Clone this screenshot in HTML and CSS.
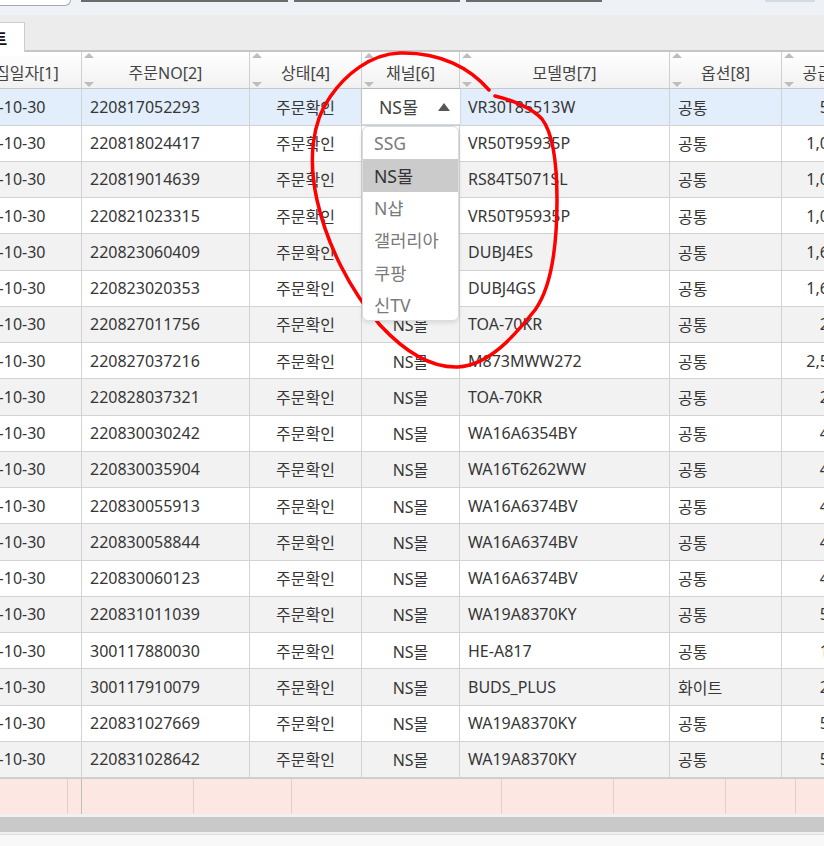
FILE: index.html
```html
<!DOCTYPE html>
<html lang="ko">
<head>
    <meta charset="UTF-8">
    <title>주문리스트</title>
    <link rel="stylesheet" href="styles.css">
</head>
<body>
    <div class="topbar">
        <div class="search-box"></div>
        <div class="field f1"></div>
        <div class="field f2"></div>
        <div class="field f3"></div>
        <div class="top-btn"></div>
    </div>

    <div class="tabbar">
        <div class="tab">리스트</div>
    </div>

    <div class="grid">
        <div class="grid-inner">
            <div class="row head">
                <div class="cell"><span class="sort-up"></span><span class="sort-down"></span>수집일자[1]</div>
                <div class="cell"><span class="sort-up"></span><span class="sort-down"></span>주문NO[2]</div>
                <div class="cell"><span class="sort-up"></span><span class="sort-down"></span>상태[4]</div>
                <div class="cell"><span class="sort-up"></span><span class="sort-down"></span>채널[6]</div>
                <div class="cell"><span class="sort-up"></span><span class="sort-down"></span>모델명[7]</div>
                <div class="cell"><span class="sort-up"></span><span class="sort-down"></span>옵션[8]</div>
                <div class="cell"><span class="sort-up"></span><span class="sort-down"></span>공급가[9]</div>
            </div>

            <div class="row selected">
                <div class="cell date">2022-10-30</div>
                <div class="cell">220817052293</div>
                <div class="cell c">주문확인</div>
                <div class="cell editing">
                    <div class="select">
                        <span>NS몰</span>
                        <span class="caret"></span>
                    </div>
                    <ul class="options">
                        <li>SSG</li>
                        <li class="hover">NS몰</li>
                        <li>N샵</li>
                        <li>갤러리아</li>
                        <li>쿠팡</li>
                        <li>신TV</li>
                    </ul>
                </div>
                <div class="cell">VR30T85513W</div>
                <div class="cell">공통</div>
                <div class="cell r">590,000</div>
            </div>

            <div class="row">
                <div class="cell date">2022-10-30</div><div class="cell">220818024417</div><div class="cell c">주문확인</div><div class="cell c">NS몰</div><div class="cell">VR50T95935P</div><div class="cell">공통</div><div class="cell r">1,090,000</div>
            </div>
            <div class="row alt">
                <div class="cell date">2022-10-30</div><div class="cell">220819014639</div><div class="cell c">주문확인</div><div class="cell c">NS몰</div><div class="cell">RS84T5071SL</div><div class="cell">공통</div><div class="cell r">1,049,000</div>
            </div>
            <div class="row">
                <div class="cell date">2022-10-30</div><div class="cell">220821023315</div><div class="cell c">주문확인</div><div class="cell c">NS몰</div><div class="cell">VR50T95935P</div><div class="cell">공통</div><div class="cell r">1,090,000</div>
            </div>
            <div class="row alt">
                <div class="cell date">2022-10-30</div><div class="cell">220823060409</div><div class="cell c">주문확인</div><div class="cell c">NS몰</div><div class="cell">DUBJ4ES</div><div class="cell">공통</div><div class="cell r">1,690,000</div>
            </div>
            <div class="row">
                <div class="cell date">2022-10-30</div><div class="cell">220823020353</div><div class="cell c">주문확인</div><div class="cell c">NS몰</div><div class="cell">DUBJ4GS</div><div class="cell">공통</div><div class="cell r">1,690,000</div>
            </div>
            <div class="row alt">
                <div class="cell date">2022-10-30</div><div class="cell">220827011756</div><div class="cell c">주문확인</div><div class="cell c">NS몰</div><div class="cell">TOA-70KR</div><div class="cell">공통</div><div class="cell r">259,000</div>
            </div>
            <div class="row">
                <div class="cell date">2022-10-30</div><div class="cell">220827037216</div><div class="cell c">주문확인</div><div class="cell c">NS몰</div><div class="cell">M873MWW272</div><div class="cell">공통</div><div class="cell r">2,590,000</div>
            </div>
            <div class="row alt">
                <div class="cell date">2022-10-30</div><div class="cell">220828037321</div><div class="cell c">주문확인</div><div class="cell c">NS몰</div><div class="cell">TOA-70KR</div><div class="cell">공통</div><div class="cell r">259,000</div>
            </div>
            <div class="row">
                <div class="cell date">2022-10-30</div><div class="cell">220830030242</div><div class="cell c">주문확인</div><div class="cell c">NS몰</div><div class="cell">WA16A6354BY</div><div class="cell">공통</div><div class="cell r">459,000</div>
            </div>
            <div class="row alt">
                <div class="cell date">2022-10-30</div><div class="cell">220830035904</div><div class="cell c">주문확인</div><div class="cell c">NS몰</div><div class="cell">WA16T6262WW</div><div class="cell">공통</div><div class="cell r">429,000</div>
            </div>
            <div class="row">
                <div class="cell date">2022-10-30</div><div class="cell">220830055913</div><div class="cell c">주문확인</div><div class="cell c">NS몰</div><div class="cell">WA16A6374BV</div><div class="cell">공통</div><div class="cell r">449,000</div>
            </div>
            <div class="row alt">
                <div class="cell date">2022-10-30</div><div class="cell">220830058844</div><div class="cell c">주문확인</div><div class="cell c">NS몰</div><div class="cell">WA16A6374BV</div><div class="cell">공통</div><div class="cell r">449,000</div>
            </div>
            <div class="row">
                <div class="cell date">2022-10-30</div><div class="cell">220830060123</div><div class="cell c">주문확인</div><div class="cell c">NS몰</div><div class="cell">WA16A6374BV</div><div class="cell">공통</div><div class="cell r">449,000</div>
            </div>
            <div class="row alt">
                <div class="cell date">2022-10-30</div><div class="cell">220831011039</div><div class="cell c">주문확인</div><div class="cell c">NS몰</div><div class="cell">WA19A8370KY</div><div class="cell">공통</div><div class="cell r">599,000</div>
            </div>
            <div class="row">
                <div class="cell date">2022-10-30</div><div class="cell">300117880030</div><div class="cell c">주문확인</div><div class="cell c">NS몰</div><div class="cell">HE-A817</div><div class="cell">공통</div><div class="cell r">159,000</div>
            </div>
            <div class="row alt">
                <div class="cell date">2022-10-30</div><div class="cell">300117910079</div><div class="cell c">주문확인</div><div class="cell c">NS몰</div><div class="cell">BUDS_PLUS</div><div class="cell">화이트</div><div class="cell r">219,000</div>
            </div>
            <div class="row">
                <div class="cell date">2022-10-30</div><div class="cell">220831027669</div><div class="cell c">주문확인</div><div class="cell c">NS몰</div><div class="cell">WA19A8370KY</div><div class="cell">공통</div><div class="cell r">599,000</div>
            </div>
            <div class="row alt">
                <div class="cell date">2022-10-30</div><div class="cell">220831028642</div><div class="cell c">주문확인</div><div class="cell c">NS몰</div><div class="cell">WA19A8370KY</div><div class="cell">공통</div><div class="cell r">599,000</div>
            </div>
        </div>
    </div>

    <div class="summary">
        <div class="sum-inner">
            <div class="sum-cell"></div>
            <div class="sum-cell dark"></div>
            <div class="sum-cell"></div>
            <div class="sum-cell"></div>
            <div class="sum-cell"></div>
            <div class="sum-cell"></div>
            <div class="sum-cell"></div>
            <div class="sum-cell"></div>
            <div class="sum-cell"></div>
        </div>
    </div>

    <div class="hscroll"><div class="thumb"></div></div>
    <div class="statusbar"></div>

    <!-- red pen mark over the channel column -->
    <svg class="scribble" width="824" height="846" viewBox="0 0 824 846">
        <path d="M489 90 C470 68 440 52 400 53 C370 54 345 75 330 97 C312 122 308 160 317 200 C327 245 350 290 380 325 C405 352 430 368 458 367 C490 365 515 335 535 310 C553 285 557 240 557 200 C557 160 552 132 542 119 C532 108 512 100 495 96"
              fill="none" stroke="#f00" stroke-width="3.5" stroke-linecap="round"/>
    </svg>
</body>
</html>
```

FILE: styles.css
```css
* {
    margin: 0;
    padding: 0;
    box-sizing: border-box;
}

body {
    width: 824px;
    height: 846px;
    overflow: hidden;
    position: relative;
    background-color: #f8f8f8;
    font-family: "Noto Sans", "Noto Sans CJK KR", sans-serif;
    font-size: 16px;
    color: #363636;
}

/* top search strip */
.topbar {
    height: 15px;
    background-color: #eef2f6;
    display: flex;
    align-items: flex-start;
}

.search-box {
    width: 71px;
    height: 6px;
    background-color: #fff;
    border: 1px solid #aaa;
    border-top: none;
    border-left: none;
    border-radius: 0 0 6px 0;
}

.field {
    height: 2px;
    background-color: #6b6b6b;
}

.f1 { width: 207px; margin-left: 10px; }
.f2 { width: 166px; margin-left: 6px; }
.f3 { width: 136px; margin-left: 6px; }

.top-btn {
    width: 50px;
    height: 2px;
    margin-left: auto;
    margin-right: 9px;
    background-color: #d3dce6;
}

/* tabs */
.tabbar {
    height: 37px;
    background-color: #ececec;
    border-bottom: 2px solid #c6c6c6;
    display: flex;
    align-items: flex-end;
}

.tab {
    height: 30px;
    margin-bottom: -2px;
    margin-left: -37px;
    padding: 0 17px 0 0;
    background-color: #fff;
    border: 1px solid #ccc;
    border-left: none;
    border-bottom: none;
    font-weight: bold;
    color: #111;
    display: flex;
    align-items: center;
}

/* grid */
.grid {
    overflow: hidden;
    background-color: #fff;
}

.grid-inner {
    margin-left: -42px;
    width: 930px;
}

.row {
    display: grid;
    grid-template-columns: 124px 168px 112px 98px 210px 112px 106px;
    height: 36.26px;
    border-bottom: 1px solid #d2d2d2;
    background-color: #fff;
}

.row.alt {
    background-color: #f2f2f2;
}

.row.selected {
    background-color: #e2eefb;
}

.cell {
    border-right: 1px solid #d2d2d2;
    padding: 0 8px;
    display: flex;
    align-items: center;
    white-space: nowrap;
    overflow: hidden;
}

.cell.date { padding-left: 4px; }
.cell.c { justify-content: center; }
.cell.r { justify-content: flex-end; }

.row.head {
    height: 37.3px;
    background: linear-gradient(#fff, #f1f1f1);
    border-bottom: 1px solid #c8c8c8;
    color: #444;
}

.head .cell {
    position: relative;
    justify-content: center;
    padding-top: 3px;
    border-right-color: #cfcfcf;
}

.sort-up,
.sort-down {
    position: absolute;
    left: 2px;
    width: 0;
    height: 0;
    border-left: 5px solid transparent;
    border-right: 5px solid transparent;
}

.sort-up {
    top: 1px;
    border-bottom: 5px solid #bdbdbd;
}

.sort-down {
    bottom: 1px;
    border-top: 5px solid #bdbdbd;
}

/* cell editor with open list */
.cell.editing {
    position: relative;
    overflow: visible;
    padding: 0;
    z-index: 2;
}

.select {
    flex: 1;
    height: 35px;
    margin-right: -1px;
    background-color: #fff;
    box-shadow: 0 0 2px rgba(0, 0, 0, 0.25);
    display: flex;
    align-items: center;
    justify-content: space-between;
    padding: 0 10px 0 17px;
    font-size: 17.6px;
    color: #444;
}

.caret {
    width: 0;
    height: 0;
    border-left: 6px solid transparent;
    border-right: 6px solid transparent;
    border-bottom: 8px solid #555;
}

.options {
    position: absolute;
    top: 37px;
    left: 0;
    width: 97px;
    list-style: none;
    background-color: #fff;
    border: 1px solid #dcdcdc;
    border-radius: 6px;
    box-shadow: 0 2px 4px rgba(0, 0, 0, 0.1);
    overflow: hidden;
}

.options li {
    height: 32.2px;
    padding-left: 11px;
    display: flex;
    align-items: center;
    font-size: 17.6px;
    color: #7a7a7a;
}

.options li.hover {
    background-color: #cbcbcb;
    color: #333;
}

/* summary row */
.summary {
    height: 36px;
    overflow: hidden;
    background-color: #fde7e2;
    border-top: 1px solid #cbcbcb;
}

.sum-inner {
    display: flex;
    height: 100%;
    margin-left: -42px;
}

.sum-cell {
    flex-shrink: 0;
    border-right: 1px solid #e2d0cb;
    height: 100%;
}

.sum-cell:nth-child(1) { width: 110px; }
.sum-cell:nth-child(2) { width: 14px; }
.sum-cell:nth-child(3) { width: 112px; }
.sum-cell:nth-child(4) { width: 98px; }
.sum-cell:nth-child(5) { width: 210px; }
.sum-cell:nth-child(6) { width: 112px; }
.sum-cell:nth-child(7) { width: 112px; }
.sum-cell:nth-child(8) { width: 70px; }
.sum-cell:nth-child(9) { width: 100px; }

.sum-cell.dark {
    border-right-color: #bdbdbd;
}

/* horizontal scrollbar */
.hscroll {
    height: 21px;
    padding: 3px 0;
    background-color: #f1f1f1;
    border-bottom: 1px solid #dcdcdc;
}

.thumb {
    height: 15px;
    background-color: #c9c9c9;
}

.statusbar {
    height: 11px;
    background-color: #f8f8f8;
}

.scribble {
    position: absolute;
    top: 0;
    left: 0;
    pointer-events: none;
}
```
